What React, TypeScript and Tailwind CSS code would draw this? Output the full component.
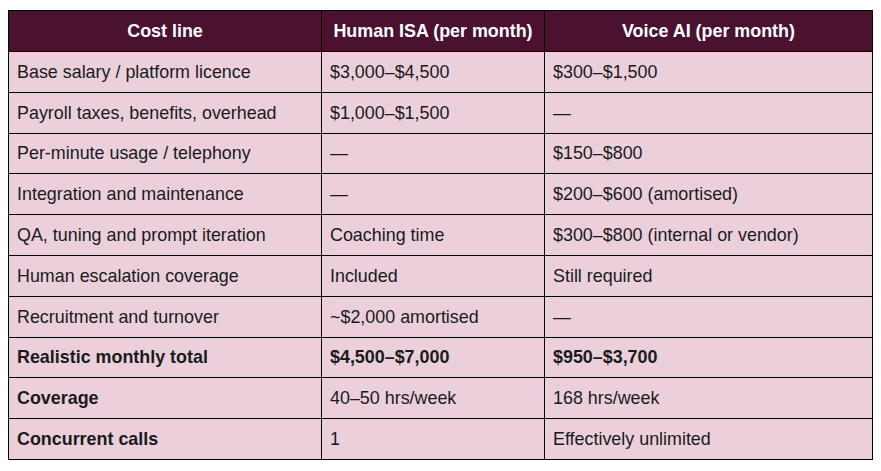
import React from "react";

const rows: { a: string; b: string; c: string; bold?: boolean; boldAll?: boolean }[] = [
  { a: "Base salary / platform licence", b: "$3,000–$4,500", c: "$300–$1,500" },
  { a: "Payroll taxes, benefits, overhead", b: "$1,000–$1,500", c: "—" },
  { a: "Per-minute usage / telephony", b: "—", c: "$150–$800" },
  { a: "Integration and maintenance", b: "—", c: "$200–$600 (amortised)" },
  { a: "QA, tuning and prompt iteration", b: "Coaching time", c: "$300–$800 (internal or vendor)" },
  { a: "Human escalation coverage", b: "Included", c: "Still required" },
  { a: "Recruitment and turnover", b: "~$2,000 amortised", c: "—" },
  { a: "Realistic monthly total", b: "$4,500–$7,000", c: "$950–$3,700", boldAll: true },
  { a: "Coverage", b: "40–50 hrs/week", c: "168 hrs/week", bold: true },
  { a: "Concurrent calls", b: "1", c: "Effectively unlimited", bold: true },
];

export default function App() {
  return (
    <div
      className="w-[881px] h-[471px] bg-white pt-[10px] pl-[8px]"
      style={{ fontFamily: '"Liberation Sans", Arial, sans-serif' }}
    >
      <table className="border-collapse w-[864px] table-fixed text-[17.9px] leading-[20px] text-[#1a1a1a]">
        <colgroup>
          <col className="w-[313px]" />
          <col className="w-[223px]" />
          <col className="w-[328px]" />
        </colgroup>
        <thead>
          <tr className="h-[41px] bg-[#4b1230] text-white">
            <th className="border border-black font-bold text-center px-[8px] py-0">Cost line</th>
            <th className="border border-black font-bold text-center px-[8px] py-0">Human ISA (per month)</th>
            <th className="border border-black font-bold text-center px-[8px] py-0">Voice AI (per month)</th>
          </tr>
        </thead>
        <tbody>
          {rows.map((r, i) => (
            <tr key={i} className="h-[40.8px] bg-[#ebd0dc]">
              <td className={`border border-black pl-[8px] pr-[8px] py-0 ${r.bold || r.boldAll ? "font-bold" : ""}`}>{r.a}</td>
              <td className={`border border-black pl-[8px] pr-[8px] py-0 ${r.boldAll ? "font-bold" : ""}`}>{r.b}</td>
              <td className={`border border-black pl-[8px] pr-[8px] py-0 ${r.boldAll ? "font-bold" : ""}`}>{r.c}</td>
            </tr>
          ))}
        </tbody>
      </table>
    </div>
  );
}
